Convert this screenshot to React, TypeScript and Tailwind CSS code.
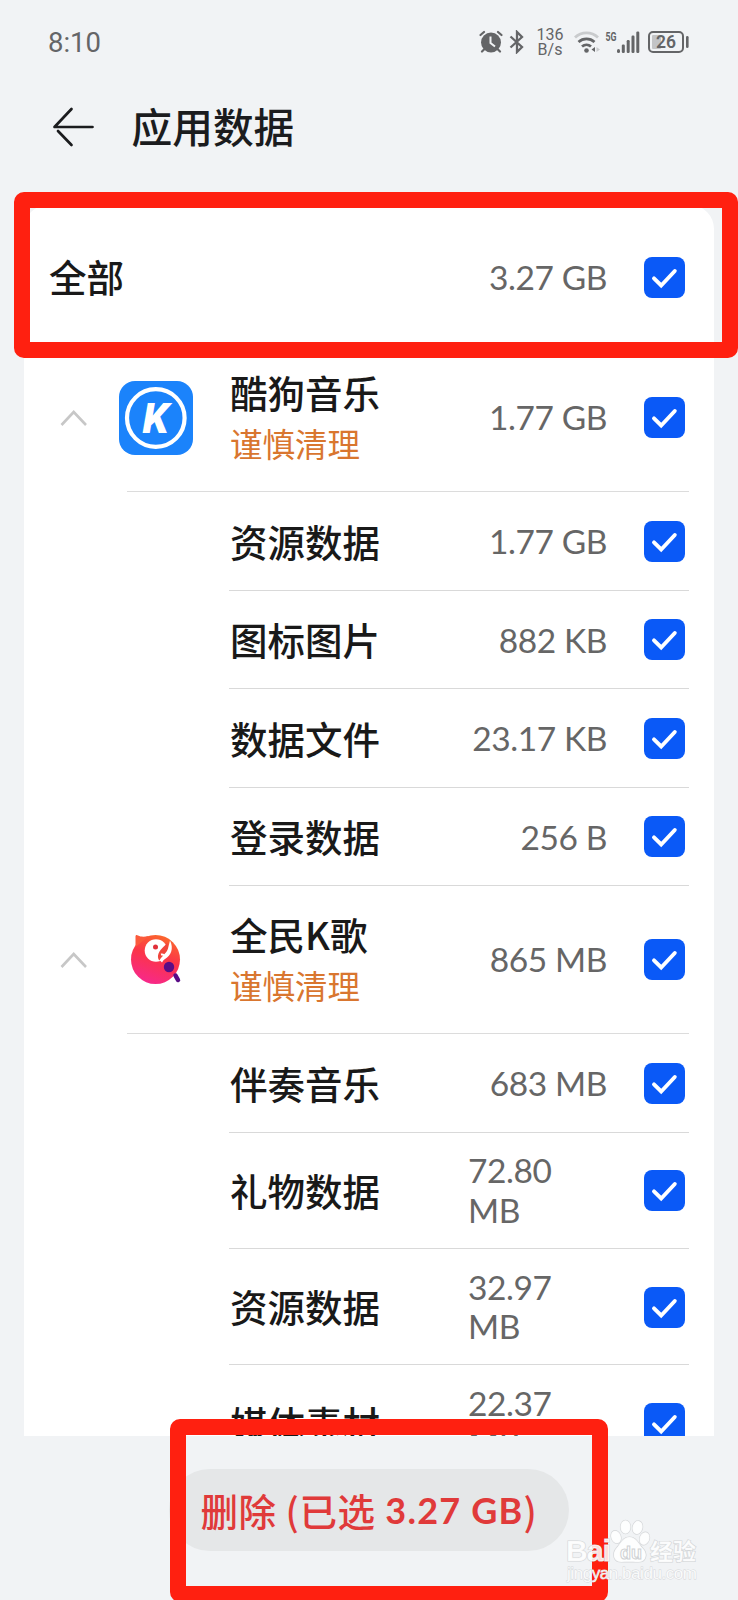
import { clsx } from "clsx";
import type { ReactNode } from "react";

type DataItem = {
  name: string;
  size: string;
  tall?: boolean;
};

type AppGroup = {
  name: string;
  size: string;
  icon: ReactNode;
  items: DataItem[];
};

function KugouIcon() {
  return (
    <svg width="74" height="74" viewBox="0 0 74 74">
      <rect width="74" height="74" rx="16" fill="#1b83fb" />
      <circle cx="36.8" cy="37" r="28.8" fill="none" stroke="#fff" strokeWidth="4.2" />
      <text
        x="36.5"
        y="52"
        textAnchor="middle"
        fontFamily="Roboto, sans-serif"
        fontSize="42"
        fontWeight="900"
        fontStyle="italic"
        fill="#fff"
      >
        K
      </text>
    </svg>
  );
}

function KaraokeIcon() {
  return (
    <svg width="74" height="74" viewBox="0 0 74 74">
      <defs>
        <linearGradient id="parrot" x1="0.7" y1="0" x2="0.35" y2="1">
          <stop offset="0" stopColor="#fb6a2c" />
          <stop offset="0.45" stopColor="#fb3548" />
          <stop offset="1" stopColor="#f7288c" />
        </linearGradient>
      </defs>
      <circle cx="36.5" cy="36.5" r="24.5" fill="url(#parrot)" />
      <path d="M16.500 24V13.500c0-1.500 1-2 2.500-1 3 1.500 6 1.500 11 .5z" fill="#fb5a3c" />
      <circle cx="37" cy="27.500" r="11.300" fill="#fff" />
      <path d="M51 17.500c4 8 1 15-5 18.500-1.500 1-2 2-3 3.500l-3-3 9-11z" fill="#fff" />
      <path d="M48 19.500c-2 4-8 7-9 13-.3 2 .5 4.500 1.500 5 1-2.500 3-4 5-6.500 3.500-3 4.500-7 2.500-11.500z" fill="#f0453c" />
      <path d="M42 31.500c2.500-.5 4 1 3.500 3.500" fill="none" stroke="#fff" strokeWidth="2" />
      <circle cx="36.500" cy="24" r="2.500" fill="#e0303a" />
      <circle cx="50" cy="44" r="5.200" fill="#5a0c86" />
      <path d="M56.500 52.500l2.500 4.500" stroke="#5a0c86" strokeWidth="4.500" strokeLinecap="round" />
    </svg>
  );
}

const GROUPS: AppGroup[] = [
  {
    name: "酷狗音乐",
    size: "1.77 GB",
    icon: <KugouIcon />,
    items: [
      { name: "资源数据", size: "1.77 GB" },
      { name: "图标图片", size: "882 KB" },
      { name: "数据文件", size: "23.17 KB" },
      { name: "登录数据", size: "256 B" },
    ],
  },
  {
    name: "全民K歌",
    size: "865 MB",
    icon: <KaraokeIcon />,
    items: [
      { name: "伴奏音乐", size: "683 MB" },
      { name: "礼物数据", size: "72.80 MB", tall: true },
      { name: "资源数据", size: "32.97 MB", tall: true },
      { name: "媒体素材", size: "22.37 MB", tall: true },
    ],
  },
];

function StatusBar() {
  return (
    <div className="flex h-[84px] shrink-0 items-center pl-[48px] pr-[49px] text-[#646567]">
      <span className="pt-px font-['Roboto','Noto_Sans_CJK_SC',sans-serif] text-[27.5px] leading-none">8:10</span>
      <svg className="ml-auto" width="24" height="24" viewBox="0 0 24 24" fill="none" stroke="currentColor">
        <circle cx="12" cy="12.500" r="10" fill="currentColor" stroke="none" />
        <path d="M1.500 5L5 2M22.500 5L19 2M5 19.500l-2 2M19 19.500l2 2" strokeWidth="2.200" strokeLinecap="round" />
        <path d="M11.500 6.500v6.500l4.500 3.500" stroke="#f1f3f5" strokeWidth="2" />
      </svg>
      <svg className="ml-[6px]" width="16" height="24" viewBox="0 0 16 24" fill="none" stroke="currentColor" strokeWidth="2.300">
        <path d="M1.500 6.500L13 17l-5 5V2l5 5L1.500 17.500" />
      </svg>
      <div className="ml-[11px] flex w-[28px] flex-col items-center pt-px font-['Roboto',sans-serif] text-[16px] leading-[14.5px]">
        <span>136</span>
        <span>B/s</span>
      </div>
      <svg className="ml-[10px]" width="26" height="24" viewBox="0 0 26 24" fill="none" stroke="currentColor" strokeWidth="2.800">
        <path d="M1 7.500a16.500 16.500 0 0 1 23 0" stroke="#c9cbcd" />
        <path d="M4.500 12a12 12 0 0 1 16 0M8 16.500a7 7 0 0 1 9 0" />
        <circle cx="12.500" cy="20.500" r="2.300" fill="currentColor" stroke="none" />
        <path d="M21 17v5l-3.500-2.500z" fill="currentColor" stroke="none" />
        <path d="M22.500 17v5l3.500-2.500z" fill="#c9cbcd" stroke="none" />
      </svg>
      <svg className="ml-[5px]" width="12" height="22" viewBox="0 0 12 22" fill="currentColor">
        <text
          x="0.500"
          y="10"
          fontFamily="Roboto, sans-serif"
          fontSize="12.500"
          fontWeight="700"
          textLength="11"
          lengthAdjust="spacingAndGlyphs"
        >
          5G
        </text>
      </svg>
      <svg width="23" height="22" viewBox="0 0 23 22" fill="currentColor">
        <rect x="0" y="18" width="3" height="4" rx="1.500" />
        <rect x="4.800" y="13.500" width="3" height="8.500" rx="1.200" />
        <rect x="9.700" y="9" width="3" height="13" rx="1.200" />
        <rect x="14.500" y="4.500" width="3" height="17.500" rx="1.200" />
        <rect x="19.300" y="0.500" width="3" height="21.500" rx="1.200" />
      </svg>
      <svg className="ml-[8px]" width="41" height="22" viewBox="0 0 41 22" fill="currentColor">
        <rect x="1" y="1" width="34" height="20" rx="4" fill="none" stroke="currentColor" strokeWidth="2" />
        <rect x="4" y="4" width="9" height="14" rx="1" fill="#c3c4c6" />
        <text x="18" y="17.300" textAnchor="middle" fontFamily="Roboto, sans-serif" fontSize="17.500" fontWeight="600">
          26
        </text>
        <rect x="38" y="5" width="2.600" height="12" rx="1.300" />
      </svg>
    </div>
  );
}

function TitleBar() {
  return (
    <header className="flex h-[87px] shrink-0 items-center pb-[2px] pl-[52px]">
      <svg width="43" height="40" viewBox="0 0 43 40" fill="none" stroke="#1b1c1e" strokeWidth="2.700" strokeLinecap="round">
        <path d="M19.500 2L2.500 20h38M6 24l13.500 14" strokeLinejoin="round" />
      </svg>
      <h1 className="ml-[36.500px] text-[40.7px] font-medium leading-none text-[#1b1c1e]">应用数据</h1>
    </header>
  );
}

function Checkbox() {
  return (
    <div className="flex h-[41px] w-[41px] shrink-0 items-center justify-center rounded-[8px] bg-[#0a59f7]">
      <svg width="41" height="41" viewBox="0 0 41 41" fill="none">
        <path d="M10 21.300l7.200 7.200L30.800 14" stroke="#fff" strokeWidth="3.900" strokeLinecap="round" />
      </svg>
    </div>
  );
}

function Size({ value, wrap }: { value: string; wrap?: boolean }) {
  return (
    <span
      className={clsx(
        "ml-auto font-['Lato','Noto_Sans_CJK_SC',sans-serif] text-[33.5px] leading-[39.3px] tracking-[-0.4px] text-[#666]",
        wrap ? "w-[139px] pr-[20px]" : "whitespace-nowrap pt-px"
      )}
    >
      {value}
    </span>
  );
}

function GroupHeader({ group }: { group: AppGroup }) {
  return (
    <div className="flex h-[148px] shrink-0">
      <div className="flex w-[103px] items-center pl-[36px]">
        <svg width="28" height="18" viewBox="0 0 28 18" fill="none" stroke="#c7c7c7" strokeWidth="2.600">
          <path d="M1.500 16L13.700 3L26 16" />
        </svg>
      </div>
      <div className="flex w-[562px] items-center border-b border-[#dcdcdc]">
        <div className="-ml-[8px] w-[111px]">{group.icon}</div>
        <div className="flex flex-col whitespace-nowrap pb-[2px]">
          <span className="text-[37.5px] font-medium leading-[52px] text-[#191919]">{group.name}</span>
          <span className="text-[32.5px] leading-[50px] text-[#d9762f]">谨慎清理</span>
        </div>
        <Size value={group.size} />
        <div className="ml-[37px] mr-[4px]">
          <Checkbox />
        </div>
      </div>
    </div>
  );
}

function ItemRow({ item }: { item: DataItem }) {
  return (
    <div
      className={clsx(
        "ml-[205px] flex w-[460px] shrink-0 items-center border-b border-[#d9d9d9] pt-px",
        item.tall ? "h-[116.4px]" : "h-[98.5px]"
      )}
    >
      <span className="whitespace-nowrap pb-[2px] pl-px text-[37.5px] font-medium leading-none text-[#191919]">
        {item.name}
      </span>
      <Size value={item.size} wrap={item.tall} />
      <div className="ml-[37px] mr-[4px]">
        <Checkbox />
      </div>
    </div>
  );
}

function Watermark() {
  return (
    <svg className="absolute left-[560px] top-[1515px]" width="150" height="78" viewBox="0 0 150 78">
      <g fill="#fff" fillOpacity="0.85" stroke="#d3d6d8" strokeWidth="1.200" paintOrder="stroke">
        <text x="6" y="46" fontFamily="Liberation Sans, sans-serif" fontSize="30" fontWeight="700" textLength="45">
          Bai
        </text>
        <ellipse cx="56" cy="22" rx="4.800" ry="6.500" transform="rotate(-20 56 22)" />
        <ellipse cx="65.500" cy="12" rx="5" ry="6.700" />
        <ellipse cx="77.500" cy="12.500" rx="5" ry="6.700" transform="rotate(12 77.500 12.500)" />
        <ellipse cx="84.500" cy="23.500" rx="4.800" ry="6.500" transform="rotate(20 84.500 23.500)" />
        <path d="M69.500 22c7 0 9 7 13 11 6 6 3.500 14-4 14-5 0-12-.5-17 0-8 0-10-8-5-14 4-4 6-11 13-11z" />
        <text x="90" y="45" fontFamily="Noto Sans CJK SC, sans-serif" fontSize="23" fontWeight="700">
          经验
        </text>
        <text x="7" y="64" fontFamily="Liberation Sans, sans-serif" fontSize="17" textLength="130" strokeWidth="0.800">
          jingyan.baidu.com
        </text>
      </g>
      <text x="60" y="44" fontFamily="Liberation Sans, sans-serif" fontSize="18" fontWeight="700" fill="#fff" stroke="#cfd2d4">
        du
      </text>
    </svg>
  );
}

export default function App() {
  return (
    <div className="relative flex h-[1600px] w-[738px] flex-col overflow-hidden bg-[#f1f3f5] font-['Noto_Sans_CJK_SC',sans-serif]">
      <StatusBar />
      <TitleBar />

      <main className="ml-[24px] mt-[34px] flex h-[1231px] w-[690px] shrink-0 flex-col overflow-hidden rounded-t-[24px] bg-white">
        <div className="flex h-[139px] shrink-0 items-center pl-[25px] pr-[29px] pt-[5px]">
          <span className="pb-[3px] text-[37.5px] font-medium leading-none text-[#191919]">全部</span>
          <Size value="3.27 GB" />
          <div className="ml-[37px]">
            <Checkbox />
          </div>
        </div>
        {GROUPS.map((group) => (
          <section key={group.name} className="flex shrink-0 flex-col">
            <GroupHeader group={group} />
            {group.items.map((item) => (
              <ItemRow key={item.name} item={item} />
            ))}
          </section>
        ))}
      </main>

      <footer className="flex shrink-0 justify-center pt-[33px]">
        <button className="flex h-[82px] w-[400px] items-center justify-center whitespace-pre rounded-full bg-[#e5e7e8] text-[37.5px] font-medium leading-none tracking-[0.5px] text-[#e03a3a]">
          <span>删除 (已选</span>
          <span className="font-['Lato','Noto_Sans_CJK_SC',sans-serif] text-[36px] font-bold tracking-[1.2px]"> 3.27 GB</span>
          <span>)</span>
        </button>
      </footer>

      {/* highlight frames */}
      <div className="absolute left-[14px] top-[192px] h-[166px] w-[724px] rounded-[10px] border-[16px] border-[#ff2010]" />
      <div className="absolute left-[170px] top-[1419px] h-[183px] w-[438px] rounded-[10px] border-[16px] border-[#ff2010]" />
      <Watermark />
    </div>
  );
}
